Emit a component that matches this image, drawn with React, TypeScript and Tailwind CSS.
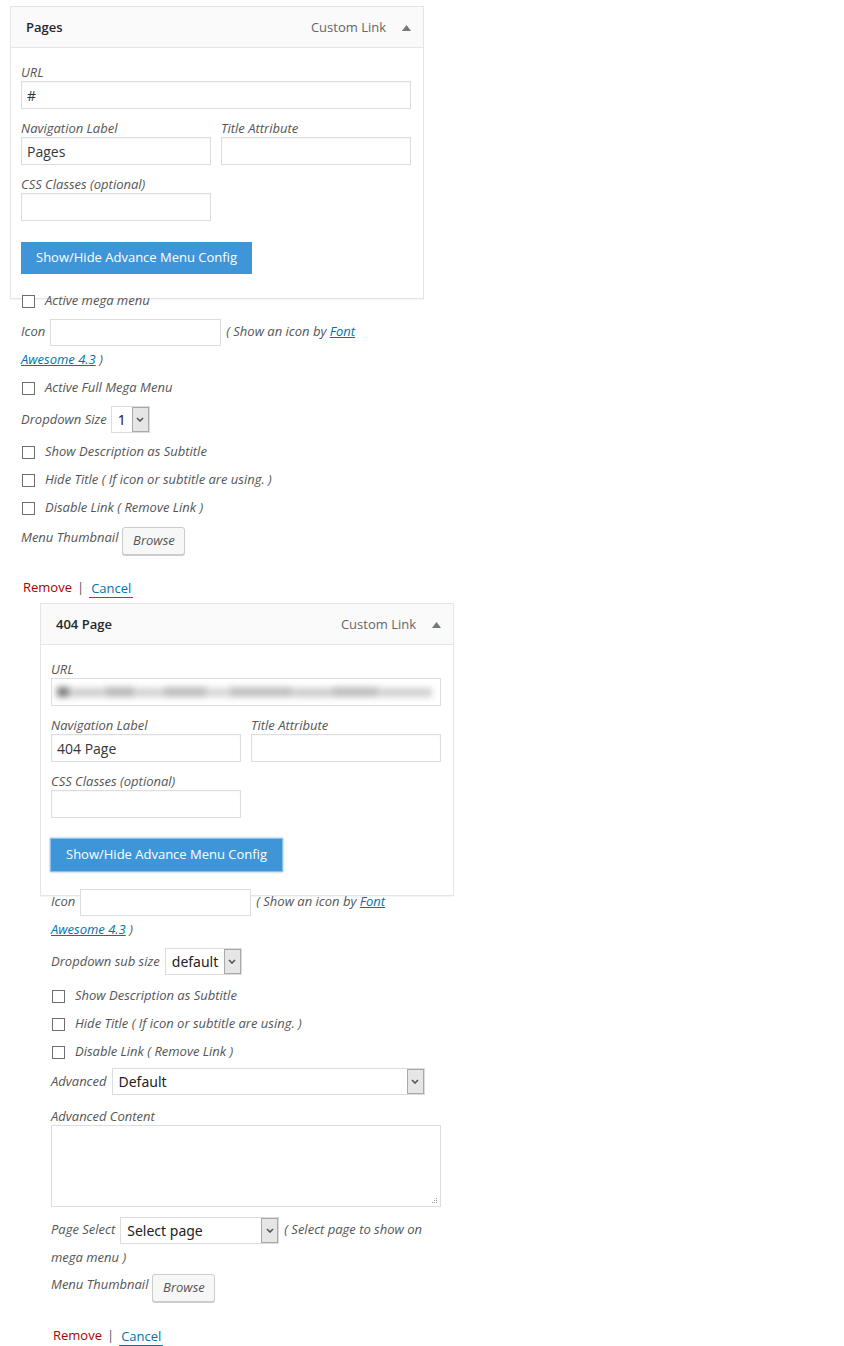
import React from 'react';

function Caret() {
  return (
    <svg width="9" height="6" viewBox="0 0 9 6" className="block">
      <polygon points="4.5,0 9,6 0,6" fill="#72777c" />
    </svg>
  );
}

function Chevron() {
  return (
    <svg width="8" height="5" viewBox="0 0 8 5" className="block">
      <path d="M1 1 L4 4 L7 1" fill="none" stroke="#555" strokeWidth="1.6" />
    </svg>
  );
}

function FakeSelect({ value, widthClass }: { value: string; widthClass: string }) {
  return (
    <span className={`inline-flex ${widthClass} h-[27px] items-stretch border border-[#dcdcdc] bg-white align-middle`}>
      <span className="flex flex-1 items-center pl-[6px] font-['Noto_Sans',sans-serif] text-[14px] not-italic leading-none text-[#222]">
        {value}
      </span>
      <span className="flex w-[17px] items-center justify-center border border-[#a9a9a9] bg-[#e6e6e6]">
        <Chevron />
      </span>
    </span>
  );
}

function CheckRow({ label }: { label: string }) {
  return (
    <div className="flex h-[28px] items-center">
      <span className="ml-[1px] h-[13px] w-[13px] border border-[#6e6e6e] bg-white" />
      <span className="ml-[10px] italic">{label}</span>
    </div>
  );
}

function BrowseRow() {
  return (
    <div className="flex items-start">
      <span className="italic leading-[20px]">Menu Thumbnail</span>
      <button className="ml-[4px] h-[28px] w-[63px] rounded-[3px] border border-[#ccc] bg-[#f7f7f7] text-[13px] italic text-[#555] shadow-[0_1px_0_#ccc]">
        Browse
      </button>
    </div>
  );
}

function RemoveCancel() {
  return (
    <div className="flex h-[20px] items-center pl-[2px] text-[13px]">
      <span className="text-[#a00]">Remove</span>
      <span className="mx-[5px] text-[#555]">|</span>
      <span className="border-b border-[#0073aa] px-[2px] leading-[18px] text-[#0073aa]">Cancel</span>
    </div>
  );
}

function TextInput({ value, widthClass }: { value?: string; widthClass: string }) {
  return (
    <input
      readOnly
      value={value ?? ''}
      className={`block h-[28px] ${widthClass} border border-[#ddd] bg-white pl-[5px] text-[14px] text-[#32373c] shadow-[inset_0_1px_2px_rgba(0,0,0,0.04)] outline-none`}
    />
  );
}

function BlurredUrl() {
  return (
    <div className="flex h-[28px] w-[390px] items-center overflow-hidden border border-[#ddd] bg-white pl-[5px]">
      <div className="flex items-center gap-[1px] blur-[3px]">
        <span className="h-[10px] w-[12px] bg-[#7d7d7d]" />
        <span className="h-[9px] w-[34px] bg-[#cdcdcd]" />
        <span className="h-[10px] w-[30px] bg-[#b9b9b9]" />
        <span className="h-[9px] w-[26px] bg-[#d2d2d2]" />
        <span className="h-[10px] w-[44px] bg-[#bdbdbd]" />
        <span className="h-[9px] w-[20px] bg-[#d6d6d6]" />
        <span className="h-[10px] w-[64px] bg-[#c0c0c0]" />
        <span className="h-[9px] w-[36px] bg-[#cbcbcb]" />
        <span className="h-[10px] w-[48px] bg-[#bebebe]" />
        <span className="h-[9px] w-[52px] bg-[#d0d0d0]" />
      </div>
    </div>
  );
}

function Panel({ title, urlBlurred, label, focused }: { title: string; urlBlurred?: boolean; label: string; focused?: boolean }) {
  return (
    <div className="w-[414px] border border-[#e5e5e5] bg-white shadow-[0_1px_1px_rgba(0,0,0,0.04)]">
      <div className="flex h-[41px] items-center border-b border-[#e5e5e5] bg-[#fafafa] pl-[15px] pr-[12px] pt-[2px]">
        <span className="text-[13px] font-semibold text-[#23282d]">{title}</span>
        <span className="ml-auto text-[13px] text-[#666]">Custom Link</span>
        <span className="ml-[16px]">
          <Caret />
        </span>
      </div>
      <div className="pb-[24px] pl-[10px] pt-[15px]">
        <div className="h-[18px] italic leading-[18px]">URL</div>
        {urlBlurred ? <BlurredUrl /> : <TextInput value="#" widthClass="w-[390px]" />}
        <div className="mt-[10px] grid w-[390px] grid-cols-2 gap-x-[10px]">
          <div>
            <div className="h-[18px] italic leading-[18px]">Navigation Label</div>
            <TextInput value={label} widthClass="w-[190px]" />
          </div>
          <div>
            <div className="h-[18px] italic leading-[18px]">Title Attribute</div>
            <TextInput widthClass="w-[190px]" />
          </div>
        </div>
        <div className="mt-[10px] h-[18px] italic leading-[18px]">CSS Classes (optional)</div>
        <TextInput widthClass="w-[190px]" />
        <button
          className={`mt-[21px] h-[32px] bg-[#3e96d9] px-[15px] text-[13px] text-white ${
            focused ? 'shadow-[0_0_0_1px_#8cc0ea,0_0_2px_1px_rgba(30,140,190,0.6)]' : ''
          }`}
        >
          Show/Hide Advance Menu Config
        </button>
      </div>
    </div>
  );
}

function IconBlock() {
  return (
    <div className="w-[390px] leading-[26px]">
      <span className="italic">Icon</span>
      <input
        readOnly
        className="mx-[5px] inline-block h-[27px] w-[171px] border border-[#ddd] bg-white align-middle outline-none"
      />
      <span className="italic">
        ( Show an icon by{' '}
        <a className="text-[#0073aa] underline">Font Awesome 4.3</a> )
      </span>
    </div>
  );
}

function ResizeGrip() {
  return (
    <svg width="7" height="7" viewBox="0 0 7 7" className="absolute bottom-[3px] right-[3px]">
      <rect x="5" y="1" width="1" height="1" fill="#999" />
      <rect x="3" y="3" width="1" height="1" fill="#999" />
      <rect x="5" y="3" width="1" height="1" fill="#999" />
      <rect x="1" y="5" width="1" height="1" fill="#999" />
      <rect x="3" y="5" width="1" height="1" fill="#999" />
      <rect x="5" y="5" width="1" height="1" fill="#999" />
    </svg>
  );
}

export default function App() {
  return (
    <div className="min-h-[1346px] w-[844px] bg-white pl-[10px] pt-[6px] font-['Open_Sans',sans-serif] text-[13px] text-[#555]">
      {/* first menu item */}
      <div>
        <Panel title="Pages" label="Pages" />
        <div className="pl-[11px]">
          <div className="-mt-[12px]">
            <CheckRow label="Active mega menu" />
          </div>
          <div className="mt-[3px]">
            <IconBlock />
          </div>
          <div className="mt-[2px]">
            <CheckRow label="Active Full Mega Menu" />
          </div>
          <div className="mt-[4px] flex h-[27px] items-center">
            <span className="mr-[4px] italic">Dropdown Size</span>
            <FakeSelect value="1" widthClass="w-[39px]" />
          </div>
          <div className="mt-[5px]">
            <CheckRow label="Show Description as Subtitle" />
            <CheckRow label="Hide Title ( If icon or subtitle are using. )" />
            <CheckRow label="Disable Link ( Remove Link )" />
          </div>
          <div className="mt-[5px]">
            <BrowseRow />
          </div>
          <div className="mt-[23px]">
            <RemoveCancel />
          </div>
        </div>
      </div>

      {/* second menu item, nested one level */}
      <div className="ml-[30px] mt-[5px]">
        <Panel title="404 Page" label="404 Page" urlBlurred focused />
        <div className="pl-[11px]">
          <div className="-mt-[8px]">
            <IconBlock />
          </div>
          <div className="mt-[6px] flex h-[27px] items-center">
            <span className="mr-[5px] italic">Dropdown sub size</span>
            <FakeSelect value="default" widthClass="w-[77px]" />
          </div>
          <div className="mt-[7px]">
            <CheckRow label="Show Description as Subtitle" />
            <CheckRow label="Hide Title ( If icon or subtitle are using. )" />
            <CheckRow label="Disable Link ( Remove Link )" />
          </div>
          <div className="mt-[2px] flex h-[27px] items-center">
            <span className="mr-[5px] italic">Advanced</span>
            <FakeSelect value="Default" widthClass="w-[313px]" />
          </div>
          <div className="mt-[12px] h-[18px] italic leading-[18px]">Advanced Content</div>
          <div className="relative w-[390px]">
            <textarea
              readOnly
              className="block h-[82px] w-[390px] resize-none border border-[#ddd] bg-white outline-none"
            />
            <ResizeGrip />
          </div>
          <div className="mt-[9px] w-[390px] leading-[26px]">
            <span className="italic">Page Select</span>
            <span className="mx-[5px]">
              <FakeSelect value="Select page" widthClass="w-[159px]" />
            </span>
            <span className="italic">( Select page to show on mega menu )</span>
          </div>
          <div className="mt-[4px]">
            <BrowseRow />
          </div>
          <div className="mt-[24px]">
            <RemoveCancel />
          </div>
        </div>
      </div>
    </div>
  );
}
